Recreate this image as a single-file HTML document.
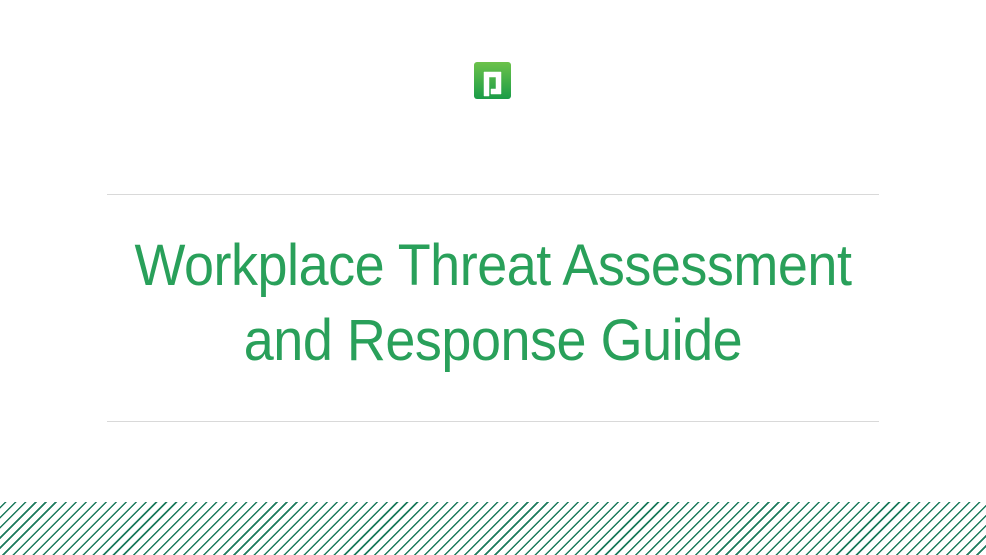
<!DOCTYPE html>
<html><head><meta charset="utf-8"><style>
html,body{margin:0;padding:0;background:#fff;width:986px;height:555px;overflow:hidden;position:relative}
.hr{position:absolute;left:107px;width:772px;height:1px;background:#d9d9d9}
.t{position:absolute;left:0;width:986px;text-align:center;font-family:"Liberation Sans",sans-serif;color:#29a05a;font-size:58px;font-weight:300;line-height:75px;top:228px;letter-spacing:-0.5px;transform:scaleX(0.93);transform-origin:493px 0}
.stripes{position:absolute;left:0;top:502px;width:986px;height:53px;background:repeating-linear-gradient(-45deg,#fff 0,#fff 5.6px,#1c7a5c 5.6px,#1c7a5c 7.1px)}
</style></head><body>
<svg style="position:absolute;left:474px;top:62px" width="37" height="37" viewBox="0 0 37 37">
<defs><linearGradient id="g" x1="0" y1="0" x2="0" y2="1"><stop offset="0" stop-color="#6cc24a"/><stop offset="1" stop-color="#1a9c47"/></linearGradient></defs>
<rect width="37" height="37" rx="3" fill="url(#g)"/>
<path d="M10 10H27V32H17V27H22V15H15V34H10Z" fill="#fff" stroke="#fff" stroke-width="0.5" stroke-linejoin="round"/>
</svg>
<div class="hr" style="top:194px"></div>
<div class="t">Workplace Threat Assessment<br>and Response Guide</div>
<div class="hr" style="top:421px"></div>
<div class="stripes"></div>
</body></html>
